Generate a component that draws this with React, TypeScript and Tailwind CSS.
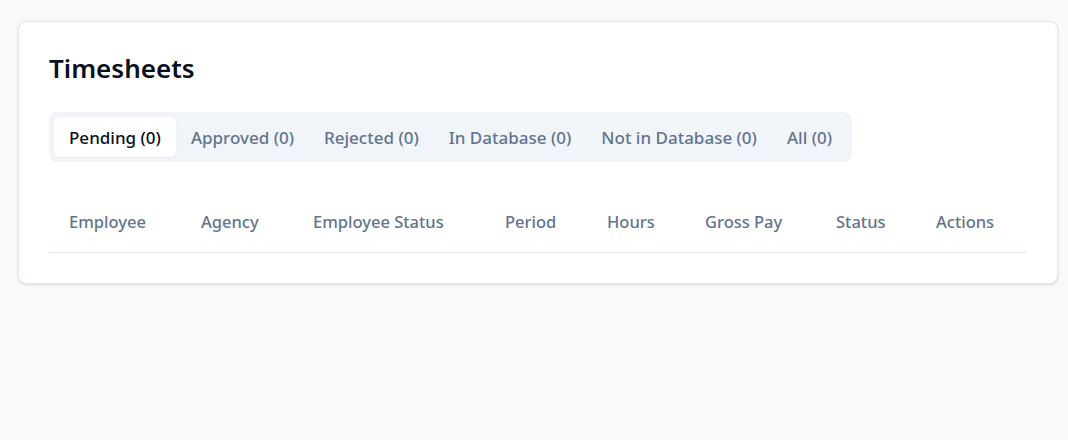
const tabs = [
  "Pending (0)",
  "Approved (0)",
  "Rejected (0)",
  "In Database (0)",
  "Not in Database (0)",
  "All (0)",
];

const columns = [
  { label: "Employee", w: "w-[132px]" },
  { label: "Agency", w: "w-[112px]" },
  { label: "Employee Status", w: "w-[192px]" },
  { label: "Period", w: "w-[102px]" },
  { label: "Hours", w: "w-[98px]" },
  { label: "Gross Pay", w: "w-[131px]" },
  { label: "Status", w: "w-[100px]" },
  { label: "Actions", w: "w-[111px]" },
];

const App = () => {
  return (
    <div className="min-h-[440px] bg-[#f8f9fa] pt-[21px] pl-[18px] font-['Noto_Sans',sans-serif]">
      <div className="w-[1040px] rounded-lg border border-slate-200 bg-white px-[30px] pt-[29px] pb-[30px] shadow-sm">
        <h1 className="text-[26px] leading-[34px] font-semibold text-[#0a0f1e]">
          Timesheets
        </h1>

        <div className="mt-[27px] inline-flex rounded-lg bg-slate-100 p-[5px]">
          {tabs.map((tab, i) => (
            <button
              key={tab}
              className={
                i === 0
                  ? "rounded-md bg-white px-[15px] pt-[9px] pb-[7px] text-[17px] leading-6 font-medium text-[#0a0f1e] shadow-xs"
                  : "rounded-md px-[15px] pt-[9px] pb-[7px] text-[17px] leading-6 font-medium text-slate-500"
              }
            >
              {tab}
            </button>
          ))}
        </div>

        <table className="mt-[30px] table-fixed border-collapse">
          <thead>
            <tr className="border-b border-slate-200">
              {columns.map((col) => (
                <th
                  key={col.label}
                  className={`${col.w} px-5 py-[18px] text-left text-[16.5px] leading-6 font-medium text-slate-500`}
                >
                  {col.label}
                </th>
              ))}
            </tr>
          </thead>
          <tbody></tbody>
        </table>
      </div>
    </div>
  );
};

export default App;
